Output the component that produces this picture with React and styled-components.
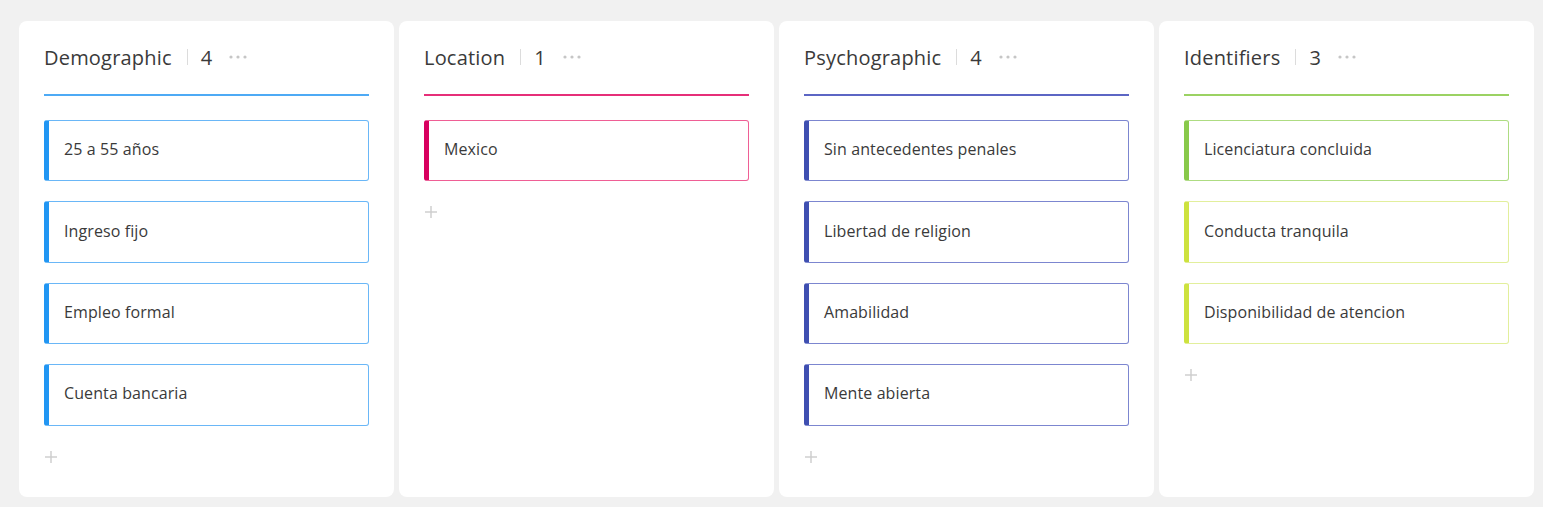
import React from 'react'
import styled, { createGlobalStyle } from 'styled-components'

const GlobalStyle = createGlobalStyle`
  html, body {
    margin: 0;
    padding: 0;
    background: #f1f1f1;
    font-family: "Open Sans", "Noto Sans", sans-serif;
  }
`

const Board = styled.div`
  display: grid;
  grid-template-columns: repeat(4, 375px);
  gap: 5px;
  padding: 21px 9px 0 19px;
  height: 507px;
  box-sizing: border-box;
  overflow: hidden;
`

const Column = styled.section`
  background: #fff;
  border-radius: 8px;
  height: 476px;
  padding: 24px 25px 0;
  box-sizing: border-box;
`

const Header = styled.div`
  display: flex;
  align-items: center;
  height: 24px;
  padding-bottom: 25px;
  border-bottom: 2px solid ${p => p.color};
  color: #3a3a3a;
  font-size: 20px;
`

const Title = styled.span`
  letter-spacing: 0.2px;
`

const Divider = styled.span`
  width: 1px;
  height: 16px;
  background: #dcdcdc;
  margin: 0 13px 0 15px;
`

const Count = styled.span``

const Dots = styled.svg`
  margin-left: 17px;
`

const CardList = styled.div`
  display: flex;
  flex-direction: column;
  gap: 20px;
  margin-top: 24px;
`

const Card = styled.div`
  height: 61.4px;
  box-sizing: border-box;
  display: flex;
  align-items: center;
  padding: 0 0 3px 15px;
  border: 1px solid ${p => p.border};
  border-left: 5px solid ${p => p.bar};
  border-radius: 3px;
  color: #3a3a3a;
  font-size: 16px;
  letter-spacing: 0.1px;
`

const AddButton = styled.button`
  display: block;
  margin-top: 25px;
  margin-left: 1px;
  padding: 0;
  border: 0;
  background: none;
  width: 12px;
  height: 12px;
  cursor: pointer;
`

const columns = [
  {
    title: 'Demographic',
    line: '#4eaaf5',
    cards: [
      { text: '25 a 55 años', bar: '#2196f3', border: '#6ab7f7' },
      { text: 'Ingreso fijo', bar: '#2196f3', border: '#6ab7f7' },
      { text: 'Empleo formal', bar: '#2196f3', border: '#6ab7f7' },
      { text: 'Cuenta bancaria', bar: '#2196f3', border: '#6ab7f7' },
    ],
  },
  {
    title: 'Location',
    line: '#e62f79',
    cards: [{ text: 'Mexico', bar: '#d8005f', border: '#ef5f95' }],
  },
  {
    title: 'Psychographic',
    line: '#5c66c4',
    cards: [
      { text: 'Sin antecedentes penales', bar: '#3f4fb1', border: '#7c86d0' },
      { text: 'Libertad de religion', bar: '#3f4fb1', border: '#7c86d0' },
      { text: 'Amabilidad', bar: '#3f4fb1', border: '#7c86d0' },
      { text: 'Mente abierta', bar: '#3f4fb1', border: '#7c86d0' },
    ],
  },
  {
    title: 'Identifiers',
    line: '#9bd263',
    cards: [
      { text: 'Licenciatura concluida', bar: '#88c94a', border: '#aedc82' },
      { text: 'Conducta tranquila', bar: '#cde23e', border: '#e2ef9c' },
      { text: 'Disponibilidad de atencion', bar: '#cde23e', border: '#e2ef9c' },
    ],
  },
]

const App = () => (
  <>
    <GlobalStyle />
    <Board>
      {columns.map(col => (
        <Column key={col.title}>
          <Header color={col.line}>
            <Title>{col.title}</Title>
            <Divider />
            <Count>{col.cards.length}</Count>
            <Dots width="18" height="4" viewBox="0 0 18 4">
              <circle cx="2" cy="2" r="1.6" fill="#c6c6c6" />
              <circle cx="9" cy="2" r="1.6" fill="#c6c6c6" />
              <circle cx="16" cy="2" r="1.6" fill="#c6c6c6" />
            </Dots>
          </Header>
          <CardList>
            {col.cards.map(card => (
              <Card key={card.text} bar={card.bar} border={card.border}>
                {card.text}
              </Card>
            ))}
          </CardList>
          <AddButton aria-label="add">
            <svg width="12" height="12" viewBox="0 0 12 12">
              <path d="M6 0v12M0 6h12" stroke="#cfcfcf" strokeWidth="1.5" />
            </svg>
          </AddButton>
        </Column>
      ))}
    </Board>
  </>
)

export default App
